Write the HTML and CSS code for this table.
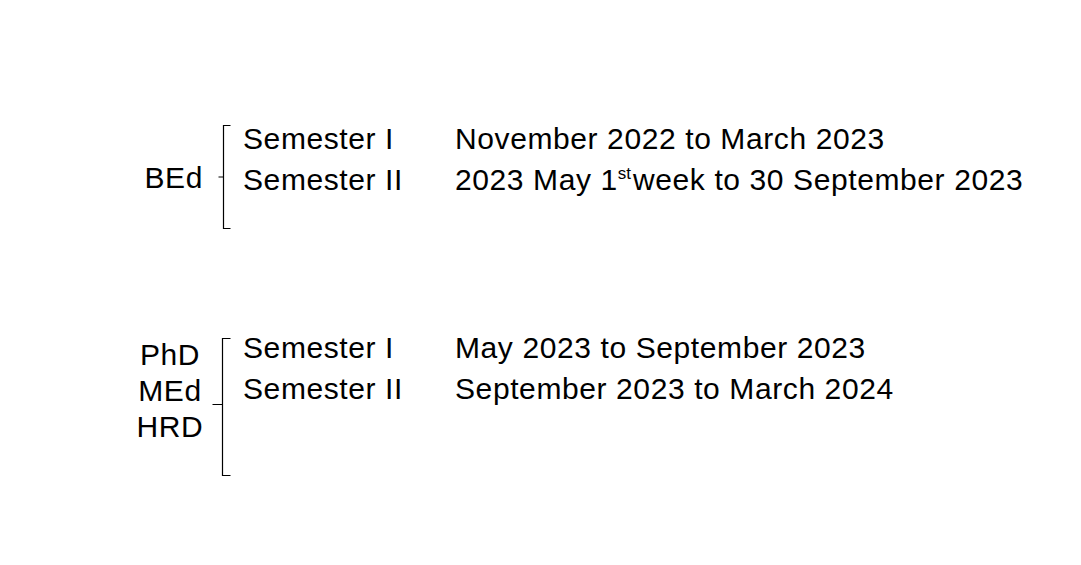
FILE: index.html
```html
<!DOCTYPE html>
<html>
<head>
<meta charset="utf-8">
<link rel="stylesheet" href="styles.css">
</head>
<body>
<main class="slide">
  <section class="group group-bed">
    <div class="label label-bed">BEd</div>
    <svg class="brace brace-bed" width="16" height="106" viewBox="0 0 16 106">
      <path d="M14.5 1.5 H7.5 V104.5 H14.5 M7.5 53 H2.5" fill="none" stroke="#000" stroke-width="1.2"/>
    </svg>
    <div class="rows">
      <div class="sem">Semester I</div><div class="date">November 2022 to March 2023</div>
      <div class="sem">Semester II</div><div class="date">2023 May 1<sup>st</sup>week to 30 September 2023</div>
    </div>
  </section>
  <section class="group group-phd">
    <div class="label label-phd">
      <div>PhD</div>
      <div>MEd</div>
      <div>HRD</div>
    </div>
    <svg class="brace brace-phd" width="22" height="140" viewBox="0 0 22 140">
      <path d="M20.5 1.5 H12.5 V138.5 H20.5 M12.5 67.5 H2.5" fill="none" stroke="#000" stroke-width="1.2"/>
    </svg>
    <div class="rows">
      <div class="sem">Semester I</div><div class="date">May 2023 to September 2023</div>
      <div class="sem">Semester II</div><div class="date">September 2023 to March 2024</div>
    </div>
  </section>
</main>
</body>
</html>
```

FILE: styles.css
```css
html, body {
  margin: 0;
  padding: 0;
  background: #fff;
}
body {
  width: 1081px;
  height: 565px;
  overflow: hidden;
  font-family: "Liberation Sans", Arial, sans-serif;
  font-size: 30px;
  color: #000;
  letter-spacing: 0.6px;
}
.slide {
  padding-top: 118px;
  padding-left: 130px;
  display: flex;
  flex-direction: column;
  gap: 97px;
}
.group {
  display: flex;
  align-items: flex-start;
}
.label {
  line-height: 41px;
  flex: none;
}
.label-bed {
  width: 73px;
  padding-right: 13px;
  text-align: right;
  margin-top: 39px;
}
.label-phd {
  width: 80px;
  text-align: center;
  line-height: 36px;
  margin-top: 10px;
}
.brace {
  display: block;
  flex: none;
}
.brace-bed {
  margin-top: 6px;
}
.brace-phd {
  margin-top: 10px;
}
.rows {
  display: grid;
  grid-template-columns: 212px auto;
  line-height: 41px;
  margin-left: 11px;
  white-space: nowrap;
}
sup {
  font-size: 17px;
  line-height: 0;
  vertical-align: 11px;
  letter-spacing: 0;
  margin-right: 2px;
}
```
